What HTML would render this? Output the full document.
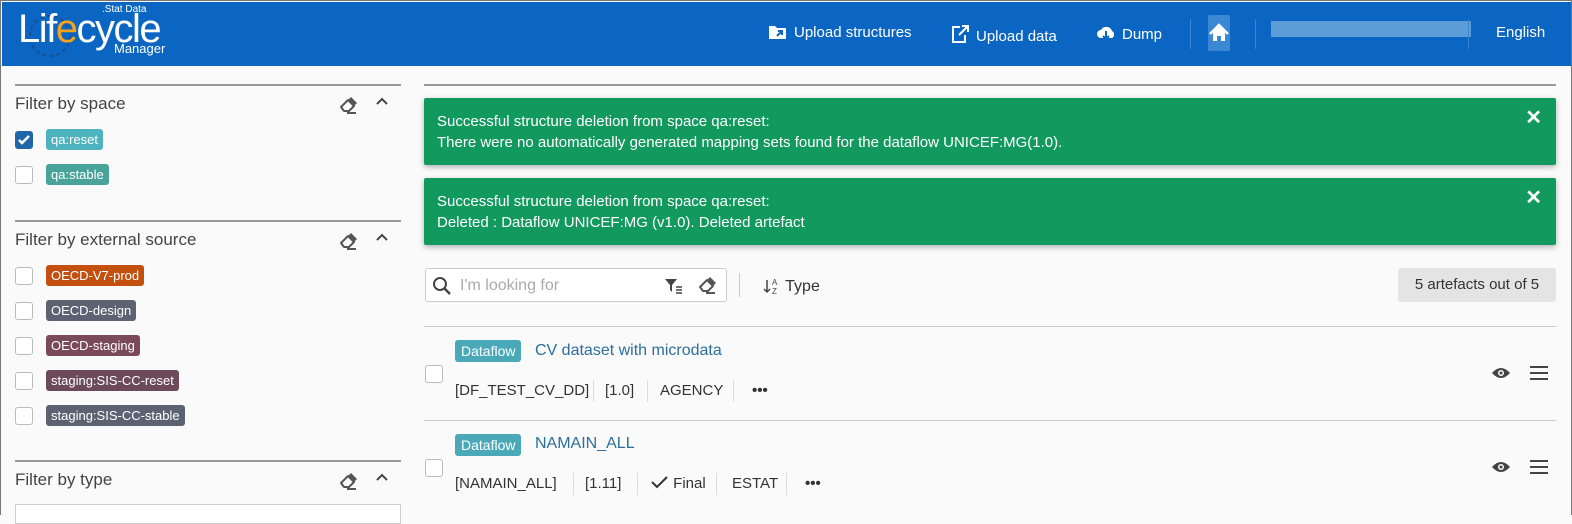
<!DOCTYPE html>
<html><head><style>
*{box-sizing:border-box;margin:0;padding:0}
body{width:1572px;height:515px;overflow:hidden;font-family:"Liberation Sans",sans-serif;background:#fafafa;position:relative;border:1px solid #777;border-bottom:none;white-space:nowrap}
.hdr{position:absolute;left:1px;top:1px;width:1569px;height:64px;background:#0b66c3;color:#fff}
.nav{position:absolute;top:22px;font-size:15px;color:#fff}
.nav svg{vertical-align:-3px;margin-right:6px}
.a{position:absolute}
.sec{position:absolute;left:14px;width:386px;border-top:2px solid #999}
.sec h3{font-weight:normal;font-size:17px;color:#444;position:absolute;top:8px;left:0}
.cb{position:absolute;width:18px;height:18px;border:1px solid #bbb;border-radius:3px;background:#fff;left:0}
.tag{position:absolute;left:31px;color:#fff;font-size:13px;padding:3px 5px;border-radius:3px;height:21px;line-height:15px}
.alert{position:absolute;left:423px;width:1132px;background:#12995d;color:#fff;font-size:15px;line-height:21px;padding:13px 13px;border-radius:2px;box-shadow:0 2px 6px rgba(0,0,0,.3)}
.x{position:absolute;right:14px;top:10px;font-size:20px;font-weight:bold}
.df{position:absolute;background:#4aa9b9;color:#fff;font-size:14px;padding:3px 6px;border-radius:3px;left:454px}
.t{position:absolute;left:534px;color:#2d6e9b;font-size:16px}
.m{position:absolute;font-size:15px;color:#333;top:0}
.sep{position:absolute;width:1px;height:22px;background:#ddd;top:-2px}
</style></head><body>
<svg width="0" height="0" style="position:absolute"><defs>
<g id="er"><path d="M2 11 L9 4 L15 10 L10 15 L5 15 Z" fill="#fff" stroke="#555" stroke-width="2" stroke-linejoin="round"/><path d="M9 4 L15 10 L18 7 L12 1 Z" fill="#555"/><path d="M8 17 H17" stroke="#555" stroke-width="2"/></g>
<g id="ch"><path d="M3 10 L8 5 L13 10" fill="none" stroke="#444" stroke-width="2"/></g>
</defs></svg>
<div class="hdr">
<svg class="a" style="left:18px;top:8px" width="60" height="50"><circle cx="30" cy="26" r="20" fill="none" stroke="#1b4f8f" stroke-width="2" stroke-dasharray="4 3"/></svg>
<div class="a" style="left:16px;top:7px;font-size:40px;letter-spacing:-1.5px;line-height:40px">Lif<span style="color:#f7a21b">e</span>cycle</div>
<div class="a" style="left:100px;top:2px;font-size:10px">.Stat Data</div>
<div class="a" style="left:112px;top:39px;font-size:13px">Manager</div>
<div class="nav" style="left:766px"><svg width="20" height="16"><path d="M1 2h6l2 2h9v11H1z" fill="#fff"/><path d="M9 12l5-5M10 7h4v4" stroke="#0b66c3" stroke-width="2" fill="none"/></svg>Upload structures</div>
<div class="nav" style="left:948px"><svg width="20" height="20"><path d="M10 3H3v15h12v-7" stroke="#fff" stroke-width="2" fill="none"/><path d="M9 11l8-8M12 2h6v6" stroke="#fff" stroke-width="2" fill="none"/></svg>Upload data</div>
<div class="nav" style="left:1094px"><svg width="20" height="18"><path d="M5 14a4 4 0 0 1 0-8a6 6 0 0 1 11 1a4 4 0 0 1 0 7z" fill="#fff"/><path d="M10 7v8M7 12l3 3l3-3" stroke="#0b66c3" stroke-width="2" fill="none"/></svg>Dump</div>
<div class="a" style="left:1188px;top:17px;width:1px;height:30px;background:#3d84cf"></div>
<div class="a" style="left:1206px;top:13px;width:22px;height:36px;background:#3b87d4;border-radius:2px"><svg width="22" height="36"><path d="M2 19L11 10L20 19" fill="none" stroke="#fff" stroke-width="2.5"/><path d="M5 17v9h4v-5h4v5h4v-9L11 11z" fill="#fff"/></svg></div>
<div class="a" style="left:1253px;top:17px;width:1px;height:30px;background:#3d84cf"></div>
<div class="a" style="left:1269px;top:19px;width:200px;height:16px;background:#5e9ed8"></div>
<div class="a" style="left:1466px;top:17px;width:1px;height:30px;background:#3d84cf"></div>
<div class="nav" style="left:1494px">English</div>
</div>
<div class="sec" style="top:83px;height:130px"><h3>Filter by space</h3>
<svg class="a" style="left:324px;top:10px" width="20" height="20"><use href="#er"/></svg><svg class="a" style="left:359px;top:8px" width="16" height="16"><use href="#ch"/></svg>
<div class="cb" style="top:45px;background:#2266aa;border-color:#2266aa"><svg width="16" height="16"><path d="M3 8l3 3l7-7" stroke="#fff" stroke-width="2.5" fill="none"/></svg></div><div class="tag" style="top:43px;background:#4db3bf">qa:reset</div>
<div class="cb" style="top:80px"></div><div class="tag" style="top:78px;background:#4aa39a">qa:stable</div></div>
<div class="sec" style="top:219px;height:230px"><h3>Filter by external source</h3>
<svg class="a" style="left:324px;top:10px" width="20" height="20"><use href="#er"/></svg><svg class="a" style="left:359px;top:8px" width="16" height="16"><use href="#ch"/></svg>
<div class="cb" style="top:45px"></div><div class="tag" style="top:43px;background:#c3500e">OECD-V7-prod</div>
<div class="cb" style="top:80px"></div><div class="tag" style="top:78px;background:#5b6373">OECD-design</div>
<div class="cb" style="top:115px"></div><div class="tag" style="top:113px;background:#7b4a5a">OECD-staging</div>
<div class="cb" style="top:150px"></div><div class="tag" style="top:148px;background:#6c4a5a">staging:SIS-CC-reset</div>
<div class="cb" style="top:185px"></div><div class="tag" style="top:183px;background:#5b6373">staging:SIS-CC-stable</div></div>
<div class="sec" style="top:459px;height:60px"><h3>Filter by type</h3>
<svg class="a" style="left:324px;top:10px" width="20" height="20"><use href="#er"/></svg><svg class="a" style="left:359px;top:8px" width="16" height="16"><use href="#ch"/></svg>
<div class="a" style="left:0;top:42px;width:386px;height:20px;border:1px solid #ccc;background:#fff"></div></div>
<div class="a" style="left:423px;top:83px;width:1132px;height:2px;background:#999"></div>
<div class="alert" style="top:97px;height:67px"><div>Successful structure deletion from space qa:reset:</div><div>There were no automatically generated mapping sets found for the dataflow UNICEF:MG(1.0).</div><span class="x">✕</span></div>
<div class="alert" style="top:177px;height:67px"><div>Successful structure deletion from space qa:reset:</div><div>Deleted : Dataflow UNICEF:MG (v1.0). Deleted artefact</div><span class="x">✕</span></div>
<div class="a" style="left:424px;top:267px;width:302px;height:34px;border:1px solid #ccc;border-radius:3px;background:#fff">
<svg class="a" style="left:6px;top:7px" width="20" height="20"><circle cx="8" cy="8" r="6" stroke="#444" stroke-width="2" fill="none"/><path d="M12.5 12.5L18 18" stroke="#444" stroke-width="2.5"/></svg>
<span class="a" style="left:34px;top:8px;font-size:16px;color:#aaa">I'm looking for</span>
<svg class="a" style="left:238px;top:9px" width="20" height="16"><path d="M1 1h12l-5 6v7l-2-2v-5z" fill="#444"/><path d="M12 9h6M12 12h6M12 15h6" stroke="#444" stroke-width="1.5"/></svg>
<svg class="a" style="left:272px;top:7px" width="20" height="20"><use href="#er"/></svg></div>
<div class="a" style="left:738px;top:272px;width:1px;height:24px;background:#ccc"></div>
<div class="a" style="left:762px;top:275px;font-size:16px;color:#333"><svg width="18" height="20" style="vertical-align:-5px"><path d="M4 4v12M1 13l3 3l3-3" stroke="#444" stroke-width="1.5" fill="none"/><text x="9" y="9" font-size="8" fill="#444" font-family="Liberation Sans">A</text><text x="9" y="18" font-size="8" fill="#444" font-family="Liberation Sans">Z</text></svg> Type</div>
<div class="a" style="left:1397px;top:267px;width:158px;height:34px;background:#e4e4e4;border-radius:3px;font-size:15px;color:#333;line-height:34px;text-align:center">5 artefacts out of 5</div>
<div class="a" style="left:423px;top:325px;width:1132px;height:1px;background:#ccc"></div>
<div class="cb" style="left:424px;top:364px"></div>
<div class="df" style="top:339px">Dataflow</div><div class="t" style="top:341px">CV dataset with microdata</div>
<div class="a" style="left:454px;top:381px;height:22px">
<span class="m" style="left:0">[DF_TEST_CV_DD]</span><span class="sep" style="left:138px"></span>
<span class="m" style="left:150px">[1.0]</span><span class="sep" style="left:192px"></span>
<span class="m" style="left:205px">AGENCY</span><span class="sep" style="left:278px"></span>
<span class="m" style="left:297px;font-weight:bold">•••</span></div>
<svg class="a" style="left:1490px;top:365px" width="20" height="14"><path d="M1 7Q10 -3 19 7Q10 17 1 7z" fill="#444"/><circle cx="10" cy="7" r="3" fill="#fff"/><circle cx="10" cy="7" r="1.5" fill="#444"/></svg>
<svg class="a" style="left:1528px;top:363px" width="20" height="18"><path d="M1 3h18M1 9h18M1 15h18" stroke="#444" stroke-width="2"/></svg>
<div class="a" style="left:423px;top:419px;width:1132px;height:1px;background:#ccc"></div>
<div class="cb" style="left:424px;top:458px"></div>
<div class="df" style="top:433px">Dataflow</div><div class="t" style="top:434px">NAMAIN_ALL</div>
<div class="a" style="left:454px;top:474px;height:22px">
<span class="m" style="left:0">[NAMAIN_ALL]</span><span class="sep" style="left:118px"></span>
<span class="m" style="left:130px">[1.11]</span><span class="sep" style="left:182px"></span>
<span class="m" style="left:196px"><svg width="18" height="14" style="vertical-align:-1px"><path d="M1 7l5 5l10-10" stroke="#333" stroke-width="2" fill="none"/></svg> Final</span><span class="sep" style="left:261px"></span>
<span class="m" style="left:277px">ESTAT</span><span class="sep" style="left:331px"></span>
<span class="m" style="left:350px;font-weight:bold">•••</span></div>
<svg class="a" style="left:1490px;top:459px" width="20" height="14"><path d="M1 7Q10 -3 19 7Q10 17 1 7z" fill="#444"/><circle cx="10" cy="7" r="3" fill="#fff"/><circle cx="10" cy="7" r="1.5" fill="#444"/></svg>
<svg class="a" style="left:1528px;top:457px" width="20" height="18"><path d="M1 3h18M1 9h18M1 15h18" stroke="#444" stroke-width="2"/></svg>
</body></html>
